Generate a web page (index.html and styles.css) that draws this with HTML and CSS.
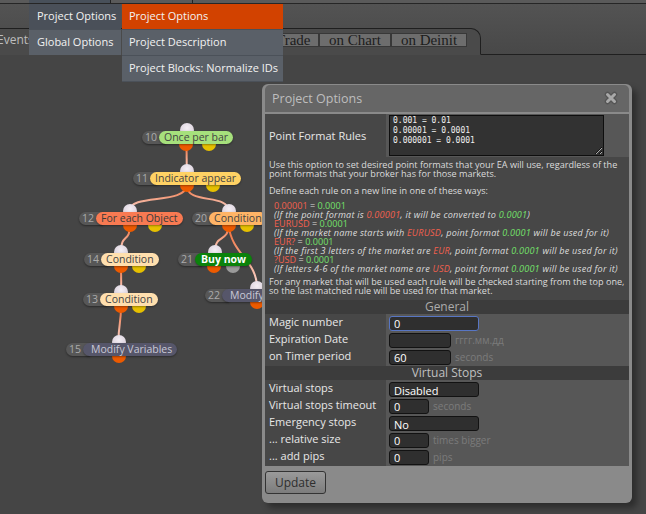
FILE: index.html
```html
<!DOCTYPE html>
<html lang="en">
<head>
  <meta charset="UTF-8">
  <title>Project Options</title>
  <link rel="stylesheet" href="styles.css">
</head>
<body>

  
  <div class="menubar">
    <span class="mb-first"></span>
    <span class="mb-item on"></span>
    <span class="mb-item"></span>
  </div>

  <!-- Event tabs -->
  <div class="tabstrip">
    <div class="tab">
      <span class="tab-title">Events</span>
      <button class="ev ev-trade">on Trade</button>
      <button class="ev ev-chart">on Chart</button>
      <button class="ev ev-deinit">on Deinit</button>
    </div>
  </div>

  <!-- Workspace with blocks -->
  <div class="workspace">
    <svg class="edges" width="646" height="460" viewBox="0 0 646 460">
      <defs>
        <linearGradient id="wire" x1="0" y1="0" x2="0" y2="1">
          <stop offset="0" stop-color="#f06a34"/>
          <stop offset="1" stop-color="#f8d8d2"/>
        </linearGradient>
      </defs>
      <g fill="none" stroke="url(#wire)" stroke-width="2">
        <path d="M186.5,89 L186.8,116"/>
        <path d="M186.5,130 C186.5,150 129.5,138 129.5,156"/>
        <path d="M186.5,130 C186.5,150 228.5,138 228.5,156"/>
        <path d="M130,170 C130,188 121,178 121,197"/>
        <path d="M121,211 L121.3,237"/>
        <path d="M121,251 C121,270 118.5,268 118.5,287"/>
        <path d="M228.5,170 C228.5,188 215,178 215,197"/>
        <path d="M228.5,170 C232,200 257,205 257,233"/>
      </g>
    </svg>

    <div class="node n10">
      <span class="bulb in" style="left:37.5px"></span>
      <span class="bulb out" style="left:37px"></span>
      <span class="bulb alt" style="left:59.5px"></span>
      <span class="n-num">10</span><span class="n-text c-green">Once per bar</span>
    </div>
    <div class="node n11">
      <span class="bulb in" style="left:46.5px"></span>
      <span class="bulb out" style="left:46.5px"></span>
      <span class="bulb alt" style="left:72.5px"></span>
      <span class="n-num">11</span><span class="n-text c-yellow">Indicator appear</span>
    </div>
    <div class="node n12">
      <span class="bulb in" style="left:43.5px"></span>
      <span class="bulb out" style="left:44px"></span>
      <span class="bulb alt" style="left:69px"></span>
      <span class="n-num">12</span><span class="n-text c-red">For each Object</span>
    </div>
    <div class="node n20">
      <span class="bulb in" style="left:29.5px"></span>
      <span class="bulb out" style="left:29.5px"></span>
      <span class="bulb alt" style="left:47.5px"></span>
      <span class="n-num">20</span><span class="n-text c-orange">Condition</span>
    </div>
    <div class="node n14">
      <span class="bulb in" style="left:30px"></span>
      <span class="bulb out" style="left:30px"></span>
      <span class="bulb alt" style="left:47.5px"></span>
      <span class="n-num">14</span><span class="n-text c-peach">Condition</span>
    </div>
    <div class="node n21">
      <span class="bulb in" style="left:30px"></span>
      <span class="bulb out" style="left:28.5px"></span>
      <span class="bulb off" style="left:48px"></span>
      <span class="n-num">21</span><span class="n-text c-buy">Buy now</span>
    </div>
    <div class="node n13">
      <span class="bulb in" style="left:31px"></span>
      <span class="bulb out" style="left:31px"></span>
      <span class="bulb alt" style="left:48.5px"></span>
      <span class="n-num">13</span><span class="n-text c-peach">Condition</span>
    </div>
    <div class="node n22">
      <span class="bulb in" style="left:45px"></span>
      <span class="bulb out" style="left:45px"></span>
      <span class="n-num">22</span><span class="n-text c-var">Modify</span>
    </div>
    <div class="node n15">
      <span class="bulb in" style="left:45.5px"></span>
      <span class="bulb out" style="left:45.5px"></span>
      <span class="n-num">15</span><span class="n-text c-var">Modify Variables</span>
    </div>

    <!-- Project Options window -->
    <div class="dialog">
      <div class="dlg-title">
        <span>Project Options</span>
        <svg class="dlg-close" width="14" height="14" viewBox="0 0 14 14">
          <path d="M3.5,3.5 L10.5,10.5 M10.5,3.5 L3.5,10.5" stroke="#555" stroke-width="5.5" stroke-linecap="round"/>
          <path d="M3.5,3.5 L10.5,10.5 M10.5,3.5 L3.5,10.5" stroke="#a9a9a9" stroke-width="3" stroke-linecap="round"/>
        </svg>
      </div>

      <div class="dlg-body">
        <div class="frow frow-tall">
          <div class="f-label">Point Format Rules</div>
          <div class="f-value">
            <textarea class="rules-box" spellcheck="false">0.001 = 0.01
0.00001 = 0.0001
0.000001 = 0.0001</textarea>
          </div>
        </div>

        <div class="desc">
          <p>Use this option to set desired point formats that your EA will use, regardless of the<br>point formats that your broker has for those markets.</p>
          <p class="define">Define each rule on a new line in one of these ways:</p>
          <div class="rules">
            <div><span class="r">0.00001</span> = <span class="g">0.0001</span></div>
            <div class="i">(If the point format is <span class="r">0.00001</span>, it will be converted to <span class="g">0.0001</span>)</div>
            <div><span class="r">EURUSD</span> = <span class="g">0.0001</span></div>
            <div class="i">(If the market name starts with <span class="r">EURUSD</span>, point format <span class="g">0.0001</span> will be used for it)</div>
            <div><span class="r">EUR?</span> = <span class="g">0.0001</span></div>
            <div class="i">(If the first 3 letters of the market are <span class="r">EUR</span>, point format <span class="g">0.0001</span> will be used for it)</div>
            <div><span class="r">?USD</span> = <span class="g">0.0001</span></div>
            <div class="i">(If letters 4-6 of the market name are <span class="r">USD</span>, point format <span class="g">0.0001</span> will be used for it)</div>
          </div>
          <p>For any market that will be used each rule will be checked starting from the top one,<br>so the last matched rule will be used for that market.</p>
        </div>

        <div class="shead">General</div>
        <div class="frow">
          <div class="f-label">Magic number</div>
          <div class="f-value"><input class="inp w-long focus" type="text" value="0"></div>
        </div>
        <div class="frow">
          <div class="f-label">Expiration Date</div>
          <div class="f-value"><input class="inp w-mid" type="text" value=""><span class="hint">гггг.мм.дд</span></div>
        </div>
        <div class="frow">
          <div class="f-label">on Timer period</div>
          <div class="f-value"><input class="inp w-mid" type="text" value="60"><span class="hint">seconds</span></div>
        </div>

        <div class="shead shead-vs">Virtual Stops</div>
        <div class="frow">
          <div class="f-label">Virtual stops</div>
          <div class="f-value"><select class="inp w-long"><option>Disabled</option></select></div>
        </div>
        <div class="frow">
          <div class="f-label">Virtual stops timeout</div>
          <div class="f-value"><input class="inp w-short" type="text" value="0"><span class="hint">seconds</span></div>
        </div>
        <div class="frow">
          <div class="f-label">Emergency stops</div>
          <div class="f-value"><select class="inp w-long"><option>No</option></select></div>
        </div>
        <div class="frow">
          <div class="f-label">... relative size</div>
          <div class="f-value"><input class="inp w-short" type="text" value="0"><span class="hint">times bigger</span></div>
        </div>
        <div class="frow">
          <div class="f-label">... add pips</div>
          <div class="f-value"><input class="inp w-short" type="text" value="0"><span class="hint">pips</span></div>
        </div>
      </div>

      <button class="btn-update">Update</button>
    </div>
  </div>

  <!-- Open dropdown menus -->
  <div class="menu menu-main">
    <div class="menu-item active">Project Options</div>
    <div class="menu-item">Global Options</div>
  </div>
  <div class="menu menu-sub">
    <div class="menu-item hot">Project Options</div>
    <div class="menu-item">Project Description</div>
    <div class="menu-item">Project Blocks: Normalize IDs</div>
  </div>

</body>
</html>
```

FILE: styles.css
```css
/* Reset */
* {
  margin: 0;
  padding: 0;
  box-sizing: border-box;
}
html, body {
  height: 100%;
}
body {
  font-family: 'Open Sans', 'DejaVu Sans', sans-serif;
  background: #454545;
  color: #e6e6e6;
  display: flex;
  flex-direction: column;
  overflow: hidden;
}

/* Menubar */
.menubar {
  height: 4px;
  flex: none;
  display: flex;
  background: #5a5a5a;
  border-bottom: 1px solid #262626;
}
.mb-first {
  width: 29px;
}
.mb-item {
  width: 82px;
  border-right: 1px solid #222;
}
.mb-item.on {
  background: #48505a;
}

/* Event tabs */
.tabstrip {
  height: 51px;
  flex: none;
  display: flex;
  align-items: flex-end;
  background: linear-gradient(#535353, #484848);
  border-bottom: 1px solid #1f1f1f;
}
.tab {
  width: 481px;
  height: 27px;
  margin-bottom: -1px;
  padding-top: 4px;
  display: flex;
  align-items: flex-start;
  background: #4a4a4a;
  border-top: 1px solid #1f1f1f;
  border-right: 1px solid #1f1f1f;
  border-bottom: 1px solid #4a4a4a;
  border-top-right-radius: 10px;
}
.tab-title {
  width: 252px;
  margin-left: -3px;
  font-size: 12px;
  line-height: 14px;
  color: #bdbdbd;
}
.ev {
  height: 14px;
  background: #6d6d6d;
  border: 1px solid #383838;
  font-family: 'Liberation Serif', serif;
  font-size: 15px;
  line-height: 11px;
  color: #1c1c1c;
}
.ev-trade { width: 70px; }
.ev-chart { width: 72px; }
.ev-deinit { width: 76px; }

/* Workspace */
.workspace {
  flex: 1;
  position: relative;
  background: #454545;
}
.edges {
  position: absolute;
  left: 0;
  top: 0;
}

/* Blocks */
.node {
  position: absolute;
  z-index: 1;
  display: flex;
  height: 13px;
  font-size: 10.5px;
  line-height: 13px;
  white-space: nowrap;
}
.n10 { left: 142px; top: 76px; }
.n11 { left: 133px; top: 117px; }
.n12 { left: 79px; top: 157px; }
.n20 { left: 192px; top: 157px; }
.n14 { left: 84px; top: 198px; }
.n21 { left: 178px; top: 198px; }
.n13 { left: 83px; top: 238px; }
.n22 { left: 205px; top: 234px; }
.n15 { left: 66px; top: 288px; }

.n-num {
  background: #575757;
  color: #ababab;
  padding: 0 9px 0 3px;
  margin-right: -7px;
  border-radius: 7px 0 0 7px;
  box-shadow: 0 1px 2px rgba(0, 0, 0, 0.4);
}
.n-text {
  position: relative;
  padding: 0 5px;
  border-radius: 7px;
  color: #444;
  box-shadow: 0 1px 2px rgba(0, 0, 0, 0.35);
}
.c-green { background: #a6e07c; }
.c-yellow { background: #ffd264; }
.c-red { background: #f87a52; color: #3a3a3a; }
.c-orange { background: #ffb466; }
.c-peach { background: #ffdfae; }
.c-buy { background: #0b820b; color: #fff; font-weight: bold; padding: 0 6px; }
.c-var { background: #56566a; color: #c9c9d6; padding-left: 8px; }

.bulb {
  position: absolute;
  z-index: -1;
  width: 14px;
  height: 14px;
  border-radius: 50%;
}
.bulb.in {
  top: -8px;
  background: radial-gradient(circle at 50% 35%, #f4eef4, #cfc4d2);
}
.bulb.out,
.bulb.alt,
.bulb.off {
  top: 6px;
}
.bulb.out { background: #ec5a00; }
.bulb.alt { background: #e6c000; }
.bulb.off { background: #9a9a9a; }

/* Project Options window */
.dialog {
  position: absolute;
  left: 262px;
  top: 29px;
  z-index: 5;
  width: 370px;
  padding: 1px 3px 9px;
  background: #8a8a8a;
  border-radius: 6px;
  box-shadow: 5px 5px 6px rgba(0, 0, 0, 0.35);
}
.dlg-title {
  height: 27px;
  display: flex;
  align-items: center;
  justify-content: space-between;
  padding: 0 11px 1px 7px;
  background: #666;
  border-radius: 5px 5px 0 0;
  font-size: 12.5px;
  color: #bebebe;
}
.dlg-body {
  margin-top: 2px;
}

.frow {
  display: grid;
  grid-template-columns: 121px 1fr;
  height: 17px;
}
.frow-tall {
  height: 43px;
}
.f-label {
  display: flex;
  align-items: center;
  padding: 0 0 3px 4px;
  background: #474747;
  font-size: 11px;
  color: #e8e8e8;
  white-space: nowrap;
}
.frow-tall .f-label {
  padding-bottom: 0;
}
.f-value {
  display: flex;
  align-items: center;
  gap: 4px;
  padding: 1px 3px;
  background: #575757;
}
.rules-box {
  width: 215px;
  height: 41px;
  padding: 0 3px;
  background: #323232;
  border: 1px solid #0e0e0e;
  color: #f0f0f0;
  font-family: 'DejaVu Sans Mono', monospace;
  font-size: 8px;
  line-height: 10px;
  outline: none;
}

.desc {
  height: 143px;
  padding: 3px 4px 0;
  background: #474747;
  font-size: 9.1px;
  line-height: 9px;
  color: #dcdcdc;
  white-space: nowrap;
}
.define {
  margin-top: 8px;
}
.rules {
  margin: 6px 0 4px 5px;
}
.rules .i {
  font-style: italic;
  letter-spacing: 0.22px;
}
.r { color: #f2604e; }
.g { color: #74e06a; }

.shead {
  height: 14px;
  background: #3c3c3c;
  text-align: center;
  font-size: 12px;
  line-height: 14px;
  color: #ababab;
}
.shead-vs {
  height: 15px;
  line-height: 15px;
  color: #c0c0c0;
}

.inp {
  height: 15px;
  padding: 0 4px;
  background: #2f2f2f;
  border: 1px solid #121212;
  border-radius: 3px;
  color: #fff;
  font-family: inherit;
  font-size: 11px;
  outline: none;
  appearance: none;
}
.inp.focus {
  border-color: #5876c4;
}
.w-long { width: 90px; }
.w-mid { width: 62px; }
.w-short { width: 40px; }
.hint {
  font-size: 10px;
  color: #7b7b7b;
}

.btn-update {
  margin-top: 6px;
  width: 61px;
  height: 23px;
  background: linear-gradient(#9a9a9a, #7c7c7c);
  border: 1px solid #333;
  border-radius: 3px;
  font-family: inherit;
  font-size: 12px;
  color: #2e2e2e;
}

/* Dropdown menus */
.menu {
  position: absolute;
  top: 4px;
  z-index: 10;
  background: #5a6068;
  font-size: 11px;
  color: #f2f2f2;
}
.menu-main {
  left: 29px;
  width: 92px;
}
.menu-sub {
  left: 122px;
  width: 161px;
}
.menu-item {
  height: 26px;
  line-height: 23px;
  padding-left: 8px;
  border-bottom: 1px solid #4b5159;
  white-space: nowrap;
}
.menu-main .menu-item:last-child {
  border-bottom: 0;
  height: 25px;
}
.menu-sub .menu-item {
  padding-left: 7px;
}
.menu-item.active {
  background: #4a5059;
}
.menu-item.hot {
  background: #d24200;
}
```
